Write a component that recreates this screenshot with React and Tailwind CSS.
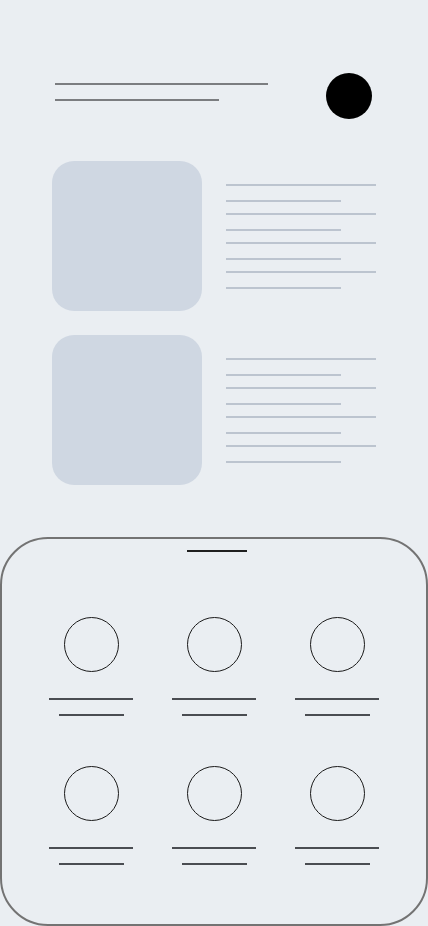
export default function App() {
  const cards = [0, 1];
  const tiles = [0, 1, 2, 3, 4, 5];

  return (
    <div className="h-[926px] w-[428px] overflow-hidden bg-[#eaeef2]">
      {/* header */}
      <div className="flex items-start justify-between pl-[55px] pr-[56px] pt-[73px]">
        <div className="mt-[10px] flex flex-col">
          <div className="h-[2px] w-[213px] bg-[#7b7d80]" />
          <div className="mt-[14px] h-[2px] w-[164px] bg-[#7b7d80]" />
        </div>
        <div className="h-[46px] w-[46px] rounded-full bg-black" />
      </div>

      {/* cards */}
      <div className="mt-[42px] flex flex-col gap-[24px] pl-[52px]">
        {cards.map((c) => (
          <div key={c} className="flex gap-[24px]">
            <div className="h-[150px] w-[150px] rounded-[22px] bg-[#cfd7e2]" />
            <div className="flex flex-col pt-[23px]">
              {[0, 1, 2, 3].map((i) => (
                <div key={i} className="flex flex-col">
                  <div className="h-[2px] w-[150px] bg-[#bcc4cf]" />
                  <div className="mb-[11px] mt-[14px] h-[2px] w-[115px] bg-[#bcc4cf]" />
                </div>
              ))}
            </div>
          </div>
        ))}
      </div>

      {/* bottom sheet */}
      <div className="mt-[52px] h-[389px] rounded-[48px] border-2 border-[#737373] bg-[#eaeef2]">
        <div className="flex justify-center pl-[6px] pt-[11px]">
          <div className="h-[2px] w-[60px] bg-[#1f1f1f]" />
        </div>
        <div className="mt-[65px] grid grid-cols-[repeat(3,123px)] justify-center gap-y-[50px]">
          {tiles.map((t) => (
            <div key={t} className="flex flex-col items-center">
              <div className="h-[55px] w-[55px] rounded-full border border-[#1a1a1a]" />
              <div className="mt-[26px] h-[2px] w-[84px] bg-[#4a4d52]" />
              <div className="mt-[14px] h-[2px] w-[65px] bg-[#4a4d52]" />
            </div>
          ))}
        </div>
      </div>
    </div>
  );
}
